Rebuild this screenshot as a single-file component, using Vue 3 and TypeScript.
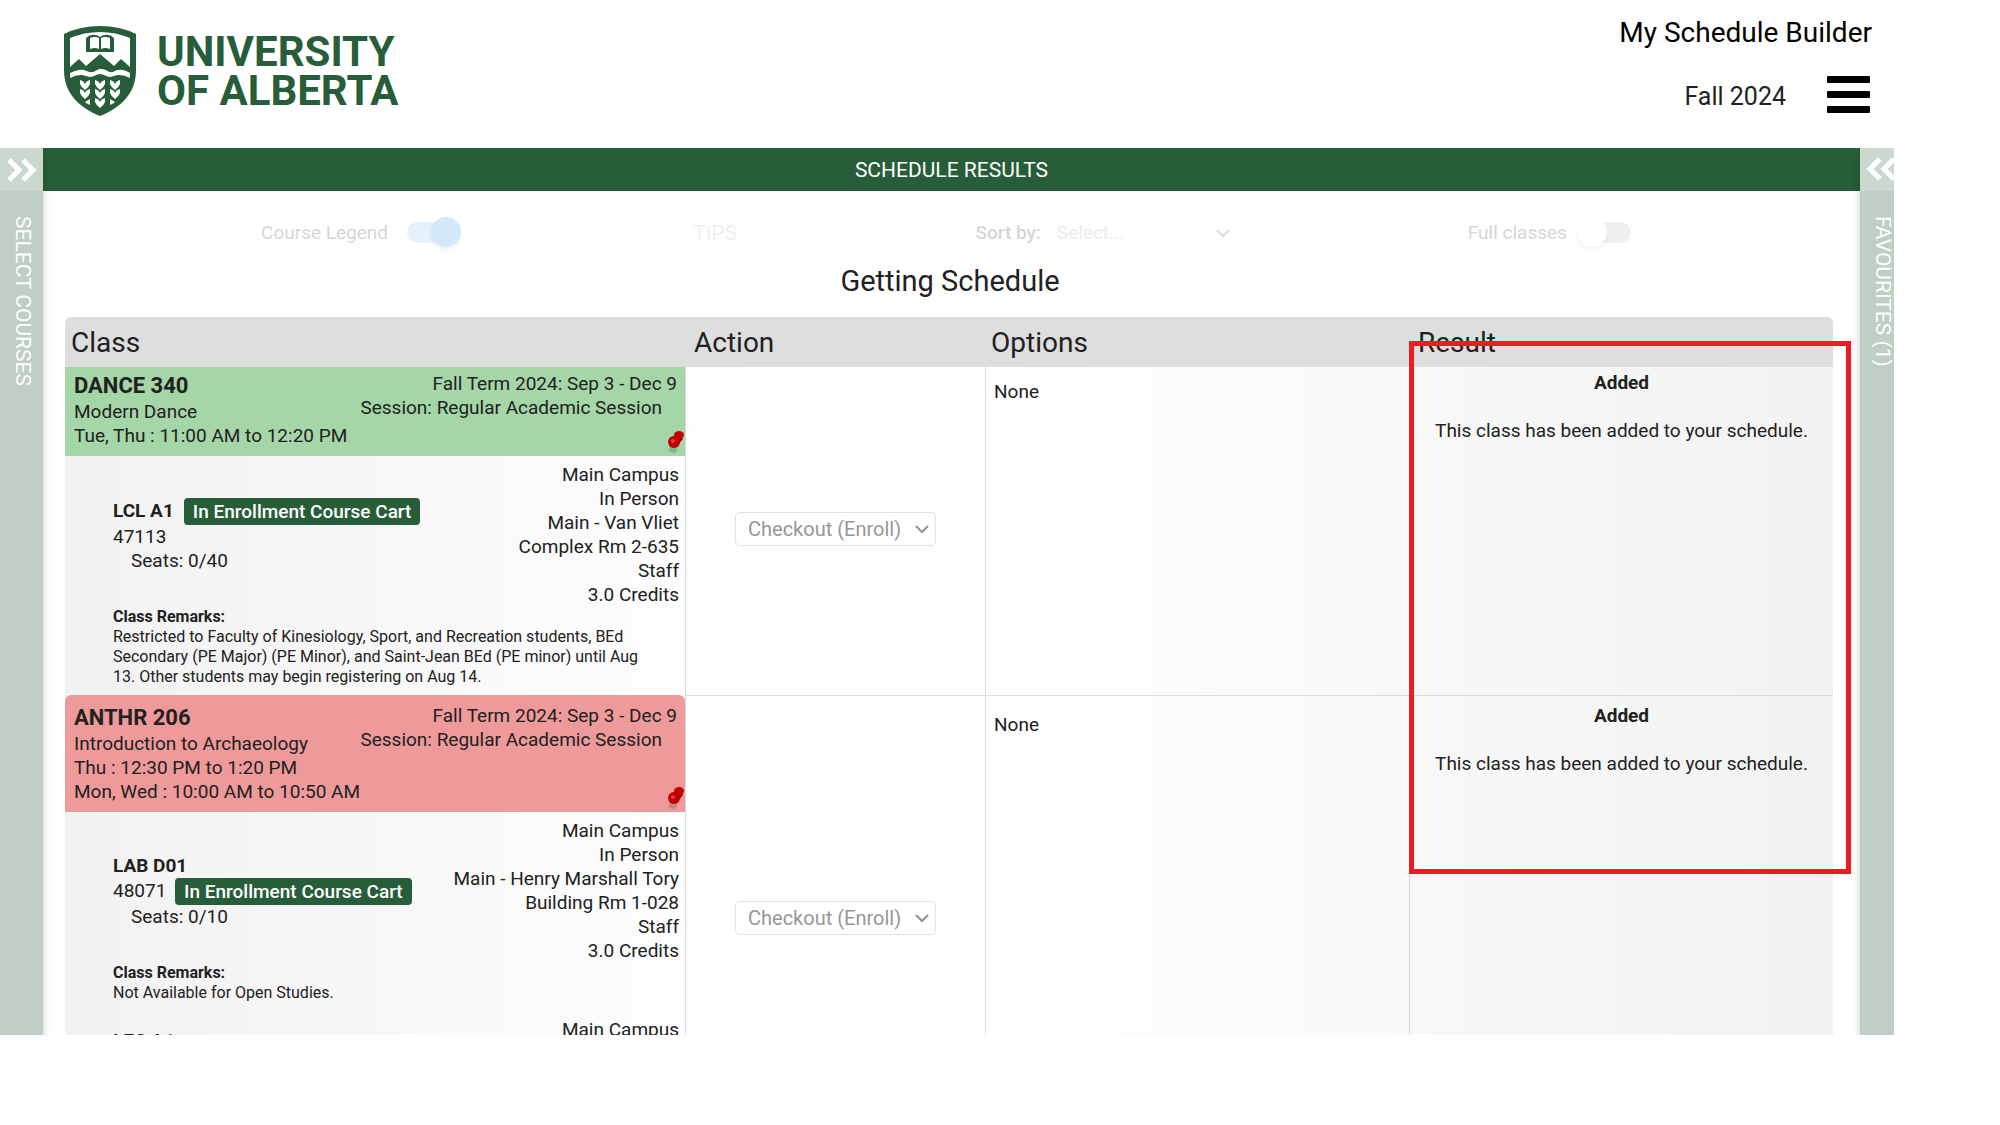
<script setup lang="ts">
import { ref } from 'vue'

interface Section {
  label: string
  number: string
  seats: string
  badgeOnLabel: boolean
  details: string[]
  remarks?: string
}

interface CourseRow {
  code: string
  name: string
  times: string[]
  tone: 'green' | 'red'
  sections: Section[]
}

const courseLegend = ref(true)
const fullClasses = ref(false)
const sortBy = ref('')

const courses: CourseRow[] = [
  {
    code: 'DANCE 340',
    name: 'Modern Dance',
    times: ['Tue, Thu : 11:00 AM to 12:20 PM'],
    tone: 'green',
    sections: [
      {
        label: 'LCL A1',
        number: '47113',
        seats: '0/40',
        badgeOnLabel: true,
        details: ['Main Campus', 'In Person', 'Main - Van Vliet', 'Complex Rm 2-635', 'Staff', '3.0 Credits'],
        remarks:
          'Restricted to Faculty of Kinesiology, Sport, and Recreation students, BEd Secondary (PE Major) (PE Minor), and Saint-Jean BEd (PE minor) until Aug 13. Other students may begin registering on Aug 14.',
      },
    ],
  },
  {
    code: 'ANTHR 206',
    name: 'Introduction to Archaeology',
    times: ['Thu : 12:30 PM to 1:20 PM', 'Mon, Wed : 10:00 AM to 10:50 AM'],
    tone: 'red',
    sections: [
      {
        label: 'LAB D01',
        number: '48071',
        seats: '0/10',
        badgeOnLabel: false,
        details: ['Main Campus', 'In Person', 'Main - Henry Marshall Tory', 'Building Rm 1-028', 'Staff', '3.0 Credits'],
        remarks: 'Not Available for Open Studies.',
      },
      {
        label: 'LEC A1',
        number: '',
        seats: '',
        badgeOnLabel: false,
        details: ['Main Campus', '', '', ''],
      },
    ],
  },
]
</script>

<template>
  <div class="app">
    <header class="top">
      <a class="brand" href="#" aria-label="University of Alberta">
        <svg class="shield" viewBox="0 0 72 90" aria-hidden="true">
          <path fill="#275d38" d="M0 8Q16 0 36 0T72 8V44C72 68 56 82 36 90C16 82 0 68 0 44Z" />
          <path fill="#fff" d="M6 12Q20 6 36 6T66 12V41L57 33L50 40L36 28L22 40L15 33L6 41Z" />
          <path fill="#fff" d="M6 47Q10 45 15 44C22 43 23 47 29 46C33 45 33 43 37 43C43 43 44 47 49 46C54 43 59 43 66 47V52Q57 47 50 50C44 53 41 48 36 48C31 48 29 53 22 50Q15 47 6 52Z" />
          <path fill="#275d38" d="M22 12Q26 8 31 9Q34 9 36 11Q38 9 41 9Q46 8 50 12V26H22Z" />
          <path fill="#fff" d="M26 12Q31 10 35 12V23Q31 21 26 23ZM37 12Q41 10 46 12V23Q41 21 37 23Z" />
          <g fill="#fff">
            <path d="M16 54Q20 55 21 58Q22 55 26 54V58Q25 61 21 64Q17 61 16 58Z" />
            <path d="M31 54Q35 55 36 58Q37 55 41 54V58Q40 61 36 64Q32 61 31 58Z" />
            <path d="M46 54Q50 55 51 58Q52 55 56 54V58Q55 61 51 64Q47 61 46 58Z" />
            <path d="M16 63Q20 64 21 67Q22 64 26 63V67Q25 70 21 73Q17 70 16 67Z" />
            <path d="M31 63Q35 64 36 67Q37 64 41 63V67Q40 70 36 73Q32 70 31 67Z" />
            <path d="M46 63Q50 64 51 67Q52 64 56 63V67Q55 70 51 73Q47 70 46 67Z" />
            <path d="M31 72Q35 73 36 76Q37 73 41 72V76Q40 79 36 82Q32 79 31 76Z" />
            <path d="M21 76L26 73V79L22 77ZM51 76L46 73V79L50 77Z" />
          </g>
        </svg>
        <span class="wordmark">UNIVERSITY<br />OF ALBERTA</span>
      </a>
      <div class="top-right">
        <div class="product">My Schedule Builder</div>
        <div class="term-row">
          <span class="term-name">Fall 2024</span>
          <button class="menu" type="button" aria-label="Menu">
            <svg viewBox="0 0 43 38" width="43" height="38" aria-hidden="true">
              <rect width="43" height="7" rx="1" />
              <rect y="15" width="43" height="7" rx="1" />
              <rect y="30" width="43" height="7" rx="1" />
            </svg>
          </button>
        </div>
      </div>
    </header>

    <div class="body">
      <aside class="rail">
        <button class="rail-toggle" type="button" aria-label="Open select courses">
          <svg viewBox="0 0 43 43" width="43" height="43" aria-hidden="true">
            <path d="M9 12L19 22L9 32M23 12L33 22L23 32" fill="none" stroke="#fff" stroke-width="5" />
          </svg>
        </button>
        <div class="rail-title">SELECT COURSES</div>
      </aside>

      <main class="main">
        <h1 class="bar">SCHEDULE RESULTS</h1>
        <div class="toolbar">
          <label class="tool">
            <span>Course Legend</span>
            <input v-model="courseLegend" class="switch" type="checkbox" />
          </label>
          <div class="tool"><button class="tips" type="button">TIPS</button></div>
          <div class="tool">
            <label class="sort-label" for="sort">Sort by:</label>
            <span class="sort-box">
              <select id="sort" v-model="sortBy">
                <option value="">Select...</option>
              </select>
              <svg class="caret" viewBox="0 0 14 9" width="14" height="9" aria-hidden="true">
                <path d="M1 1L7 7L13 1" fill="none" stroke="#ddd" stroke-width="2" />
              </svg>
            </span>
          </div>
          <label class="tool">
            <span>Full classes</span>
            <input v-model="fullClasses" class="switch switch-full" type="checkbox" />
          </label>
        </div>

        <h2 class="status">Getting Schedule</h2>

        <div class="results">
          <table>
            <colgroup>
              <col class="col-class" />
              <col class="col-action" />
              <col class="col-wide" />
              <col class="col-wide" />
            </colgroup>
            <thead>
              <tr>
                <th scope="col">Class</th>
                <th scope="col">Action</th>
                <th scope="col">Options</th>
                <th scope="col">Result</th>
              </tr>
            </thead>
            <tbody>
              <tr v-for="course in courses" :key="course.code">
                <td class="class-cell">
                  <div class="course" :class="course.tone">
                    <div class="course-main">
                      <div class="course-code">{{ course.code }}</div>
                      <div>{{ course.name }}</div>
                      <div v-for="time in course.times" :key="time">{{ time }}</div>
                    </div>
                    <div class="course-term">
                      <div>Fall Term 2024: Sep 3 - Dec 9</div>
                      <div class="session">Session: Regular Academic Session</div>
                    </div>
                    <svg class="pin" viewBox="0 0 17 24" width="17" height="24" aria-hidden="true">
                      <ellipse cx="5" cy="19" rx="4" ry="4" fill="#000" opacity=".16" />
                      <path d="M5 7L12 4L15 9L10 15Z" fill="#a80000" />
                      <ellipse cx="11" cy="5" rx="5" ry="4" fill="#c40000" />
                      <circle cx="6" cy="12" r="6" fill="#c00000" />
                      <circle cx="5" cy="11" r="2" fill="#e63c3c" />
                    </svg>
                  </div>
                  <div v-for="section in course.sections" :key="section.label" class="section">
                    <div class="section-info">
                      <div class="section-left">
                        <div>
                          <b>{{ section.label }}</b>
                          <span v-if="section.badgeOnLabel" class="badge">In Enrollment Course Cart</span>
                        </div>
                        <div>
                          {{ section.number }}
                          <span v-if="!section.badgeOnLabel" class="badge">In Enrollment Course Cart</span>
                        </div>
                        <div class="seats">Seats: {{ section.seats }}</div>
                      </div>
                      <div class="section-right">
                        <div v-for="(line, i) in section.details" :key="i">{{ line }}</div>
                      </div>
                    </div>
                    <div v-if="section.remarks" class="remarks">
                      <b>Class Remarks:</b>
                      <div>{{ section.remarks }}</div>
                    </div>
                  </div>
                </td>
                <td class="action-cell">
                  <span class="select-box">
                    <select disabled :aria-label="'Action for ' + course.code">
                      <option>Checkout (Enroll)</option>
                    </select>
                    <svg class="caret" viewBox="0 0 14 9" width="14" height="9" aria-hidden="true">
                      <path d="M1 1L7 7L13 1" fill="none" stroke="#929292" stroke-width="2" />
                    </svg>
                  </span>
                </td>
                <td class="options-cell">None</td>
                <td class="result-cell">
                  <b>Added</b>
                  <p>This class has been added to your schedule.</p>
                </td>
              </tr>
            </tbody>
          </table>
          <div class="highlight" aria-hidden="true"></div>
        </div>
      </main>

      <aside class="rail rail-right">
        <button class="rail-toggle" type="button" aria-label="Open favourites">
          <svg viewBox="0 0 43 43" width="43" height="43" aria-hidden="true">
            <path d="M20 11L10 21L20 31M34 11L24 21L34 31" fill="none" stroke="#fff" stroke-width="5" />
          </svg>
        </button>
        <div class="rail-title">FAVOURITES (1)</div>
      </aside>
    </div>
  </div>
</template>

<style>
html,
body {
  background: #fff;
  overflow: hidden;
}
</style>

<style scoped>
.app {
  display: flex;
  flex-direction: column;
  height: calc(100vh - 90px);
  margin-right: 106px;
  overflow: hidden;
  font: 19px/24px Roboto, 'Liberation Sans', sans-serif;
  color: #212121;
}
* {
  box-sizing: border-box;
}
b {
  font-weight: 700;
}
button {
  border: 0;
  padding: 0;
  background: none;
  font: inherit;
}

.top {
  display: flex;
  justify-content: space-between;
  flex: none;
  height: 148px;
  padding: 0 22px 0 64px;
}
.brand {
  display: flex;
  gap: 21px;
  padding-top: 26px;
  color: #275d38;
  text-decoration: none;
}
.shield {
  width: 72px;
  height: 90px;
}
.wordmark {
  padding-top: 6px;
  font-size: 42px;
  line-height: 39px;
  font-weight: 700;
}
.top-right {
  display: flex;
  flex-direction: column;
  align-items: flex-end;
  padding-top: 17px;
}
.product {
  font-size: 28px;
  line-height: 32px;
  color: #000;
}
.term-row {
  display: flex;
  align-items: center;
  gap: 41px;
  margin-top: 27px;
  padding-right: 2px;
}
.term-name {
  padding-top: 4px;
  font-size: 25px;
}
.menu {
  height: 38px;
}
.menu svg {
  display: block;
}

.body {
  display: flex;
  flex: 1;
  min-height: 0;
}
.rail {
  position: relative;
  z-index: 2;
  flex: none;
  width: 43px;
  background: #c0cec3;
  box-shadow: 0 6px 8px rgba(0, 0, 0, 0.2);
}
.rail-right {
  width: 34px;
}
.rail-toggle {
  display: block;
  width: 43px;
  height: 43px;
  background: #cbd8d0;
}
.rail-toggle svg {
  display: block;
}
.rail-title {
  width: 43px;
  padding: 25px 0 0;
  writing-mode: vertical-rl;
  line-height: 41px;
  font-size: 21px;
  color: #fff;
  white-space: nowrap;
}

.main {
  flex: 1;
  min-width: 0;
  overflow: hidden;
}
.bar {
  height: 43px;
  margin: 0;
  background: #275d38;
  color: #fff;
  font-size: 21px;
  font-weight: 400;
  line-height: 44px;
  text-align: center;
}
.toolbar {
  display: grid;
  grid-template-columns: 432fr 282fr 492fr 392fr;
  align-items: center;
  height: 72px;
  padding: 11px 0 0 12%;
  color: #d6d6d6;
}
.tool {
  display: flex;
  align-items: center;
}
.switch {
  appearance: none;
  position: relative;
  width: 45px;
  height: 21px;
  margin: 0 0 0 19px;
  border-radius: 11px;
  background: #e5f2fd;
}
.switch::before {
  content: '';
  position: absolute;
  top: -5px;
  right: -9px;
  width: 30px;
  height: 30px;
  border-radius: 50%;
  background: #d3e8fb;
  box-shadow: 0 3px 5px rgba(0, 0, 0, 0.06);
}
.switch-full {
  background: #f0f0f0;
}
.switch-full::before {
  right: auto;
  left: -9px;
  background: #fff;
}
.tips {
  font-size: 21px;
  color: #efefef;
}
.sort-label {
  font-weight: 500;
}
.sort-box,
.select-box {
  position: relative;
  display: inline-block;
}
select {
  appearance: none;
  border: 0;
  background: transparent;
  font: inherit;
  opacity: 1;
}
.sort-box select {
  width: 188px;
  height: 34px;
  margin-left: 8px;
  padding: 0 8px;
  color: #ebebeb;
}
.caret {
  position: absolute;
  top: 13px;
  right: 7px;
  pointer-events: none;
}
.status {
  margin: 0 0 18px;
  padding-right: 3px;
  font-size: 29px;
  line-height: 36px;
  font-weight: 400;
  text-align: center;
}

.results {
  position: relative;
  margin: 0 27px 0 22px;
}
table {
  width: 100%;
  table-layout: fixed;
  border-spacing: 0;
  border-radius: 6px 6px 0 0;
  background: linear-gradient(to right, #f2f2f2, #fff 40%, #fff 52%, #f2f2f2);
}
.col-class {
  width: 620px;
}
.col-action {
  width: 300px;
}
.col-wide {
  width: 424px;
}
th {
  position: relative;
  z-index: 1;
  height: 46px;
  padding: 5px 9px 0;
  background: #dedede;
  box-shadow: 0 4px 0 #dedede;
  font-size: 28px;
  line-height: 32px;
  font-weight: 400;
  text-align: left;
}
th:first-child {
  padding-left: 6px;
  border-radius: 6px 0 0 0;
}
th:nth-child(3) {
  padding-left: 6px;
}
th:last-child {
  border-radius: 0 6px 0 0;
}
td {
  padding: 0;
  vertical-align: top;
}
td + td {
  border-left: 1px solid #dcdcdc;
}
tr + tr td + td {
  border-top: 1px solid #dcdcdc;
}
.course {
  position: relative;
  display: flex;
  justify-content: space-between;
  padding: 9px 8px 8px 9px;
  border-radius: 6px 6px 0 0;
  white-space: nowrap;
}
.green {
  background: #a5d6a7;
}
.red {
  background: #ef9a9a;
}
.course-code {
  font-size: 22px;
  line-height: 28px;
  font-weight: 700;
}
.course-term {
  text-align: right;
}
.session {
  padding-right: 15px;
}
.pin {
  position: absolute;
  right: 0;
  bottom: 2px;
}
.section {
  min-height: 129px;
  padding: 7px 6px 8px 48px;
}
.section-info {
  display: flex;
  align-items: center;
  justify-content: space-between;
}
.section-right {
  text-align: right;
}
.section-right div {
  min-height: 24px;
}
.badge {
  display: inline-block;
  margin-left: 4px;
  padding: 0 9px;
  border-radius: 4px;
  background: #275d38;
  color: #fff;
  font-weight: 500;
  line-height: 27px;
  vertical-align: middle;
}
b + .badge {
  margin-left: 10px;
}
.seats {
  padding-left: 18px;
}
.remarks {
  padding-right: 32px;
  font-size: 16px;
  line-height: 20px;
}
.action-cell {
  vertical-align: middle;
  text-align: center;
}
.select-box select {
  display: block;
  width: 201px;
  height: 34px;
  padding: 0 12px;
  border: 1px solid #e2e2e2;
  border-radius: 5px;
  font-size: 20px;
  color: #979797;
}
.options-cell {
  padding: 17px 8px;
}
.result-cell {
  padding: 8px;
  text-align: center;
}
.result-cell p {
  margin: 24px 0 0;
}
.highlight {
  position: absolute;
  top: 24px;
  right: -18px;
  z-index: 2;
  width: 25%;
  height: 533px;
  border: 5px solid #ed1c24;
  pointer-events: none;
}
</style>
